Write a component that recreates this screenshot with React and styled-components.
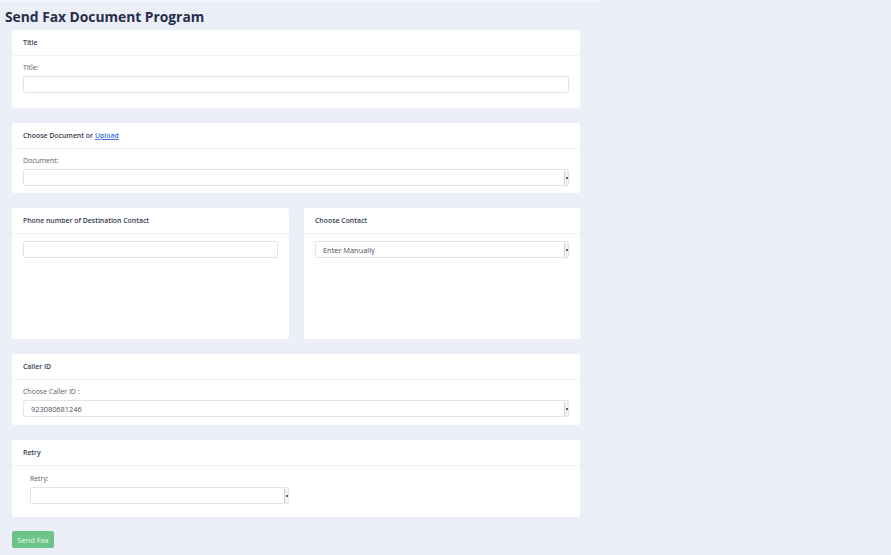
import React from "react";
import styled, { createGlobalStyle } from "styled-components";

const Global = createGlobalStyle`
  html, body { margin: 0; padding: 0; background: #eceff7; }
  body { font-family: "Open Sans", "Noto Sans", sans-serif; }
  * { box-sizing: border-box; }
`;

const Page = styled.div`
  width: 891px;
  height: 555px;
  background: #eceff7;
  position: relative;
  overflow: hidden;
`;

const TopStrip = styled.div`
  width: 600px;
  height: 2px;
  background: #f3f5fa;
`;

const Heading = styled.h1`
  margin: 0;
  padding: 5px 0 0 5px;
  height: 28px;
  font-size: 13.8px;
  line-height: 20px;
  font-weight: 700;
  color: #262d4a;
`;

const Content = styled.div`
  width: 568px;
  margin-left: 12px;
  display: flex;
  flex-direction: column;
  gap: 15px;
`;

const Row = styled.div`
  display: grid;
  grid-template-columns: 277px 276px;
  gap: 15px;
`;

const Card = styled.section`
  background: #fff;
  border-radius: 2px;
  height: ${(p) => p.$h}px;
  display: flex;
  flex-direction: column;
`;

const CardHeader = styled.div`
  height: 26px;
  padding: 0 11px;
  display: flex;
  align-items: center;
  border-bottom: 1px solid #f1f2f5;
  font-size: 6.9px;
  font-weight: 600;
  color: #363b4f;
`;

const UploadLink = styled.a`
  color: #3b6ce0;
  text-decoration: underline;
  margin-left: 2px;
  font-weight: 600;
`;

const CardBody = styled.div`
  padding: ${(p) => p.$pt ?? 7}px 11px 0 ${(p) => p.$pl ?? 11}px;
  display: flex;
  flex-direction: column;
`;

const Label = styled.label`
  font-size: 6.9px;
  line-height: 10px;
  color: #555a66;
  margin-bottom: 3px;
`;

const Input = styled.div`
  width: ${(p) => p.$w || "100%"};
  height: 17px;
  border: 1px solid #e3e4e8;
  border-radius: 2px;
  background: #fff;
  position: relative;
  font-size: 7.4px;
  color: #4a4e5a;
  display: flex;
  align-items: center;
  padding-left: 7px;
`;

const Spinner = styled.span`
  position: absolute;
  right: 0;
  top: 1px;
  bottom: 0;
  width: 4px;
  background: #f1f1f1;
  border-left: 1px solid #d4d4d4;
  &::after {
    content: "";
    position: absolute;
    left: 1px;
    right: 0;
    top: 6px;
    height: 2px;
    background: #5a5a5a;
  }
`;

const Button = styled.button`
  margin: 14px 0 0 12px;
  width: 42px;
  height: 17px;
  border: none;
  border-radius: 2px;
  background: #6cc488;
  color: #e9f7ee;
  font-family: inherit;
  font-size: 7.5px;
  padding: 0;
`;

export default function App() {
  return (
    <Page>
      <Global />
      <TopStrip />
      <Heading>Send Fax Document Program</Heading>
      <Content>
        <Card $h={78}>
          <CardHeader>Title</CardHeader>
          <CardBody $pt={7}>
            <Label>Title:</Label>
            <Input />
          </CardBody>
        </Card>
        <Card $h={70}>
          <CardHeader>
            Choose Document or <UploadLink href="#">Upload</UploadLink>
          </CardHeader>
          <CardBody $pt={7}>
            <Label>Document:</Label>
            <Input>
              <Spinner />
            </Input>
          </CardBody>
        </Card>
        <Row>
          <Card $h={131}>
            <CardHeader>Phone number of Destination Contact</CardHeader>
            <CardBody $pt={7}>
              <Input />
            </CardBody>
          </Card>
          <Card $h={131}>
            <CardHeader>Choose Contact</CardHeader>
            <CardBody $pt={7}>
              <Input>
                Enter Manually
                <Spinner />
              </Input>
            </CardBody>
          </Card>
        </Row>
        <Card $h={71}>
          <CardHeader>Caller ID</CardHeader>
          <CardBody $pt={7}>
            <Label>Choose Caller ID :</Label>
            <Input>
              923080681246
              <Spinner />
            </Input>
          </CardBody>
        </Card>
        <Card $h={77}>
          <CardHeader>Retry</CardHeader>
          <CardBody $pt={8} $pl={18}>
            <Label>Retry:</Label>
            <Input $w="259px">
              <Spinner />
            </Input>
          </CardBody>
        </Card>
      </Content>
      <Button>Send Fax</Button>
    </Page>
  );
}
